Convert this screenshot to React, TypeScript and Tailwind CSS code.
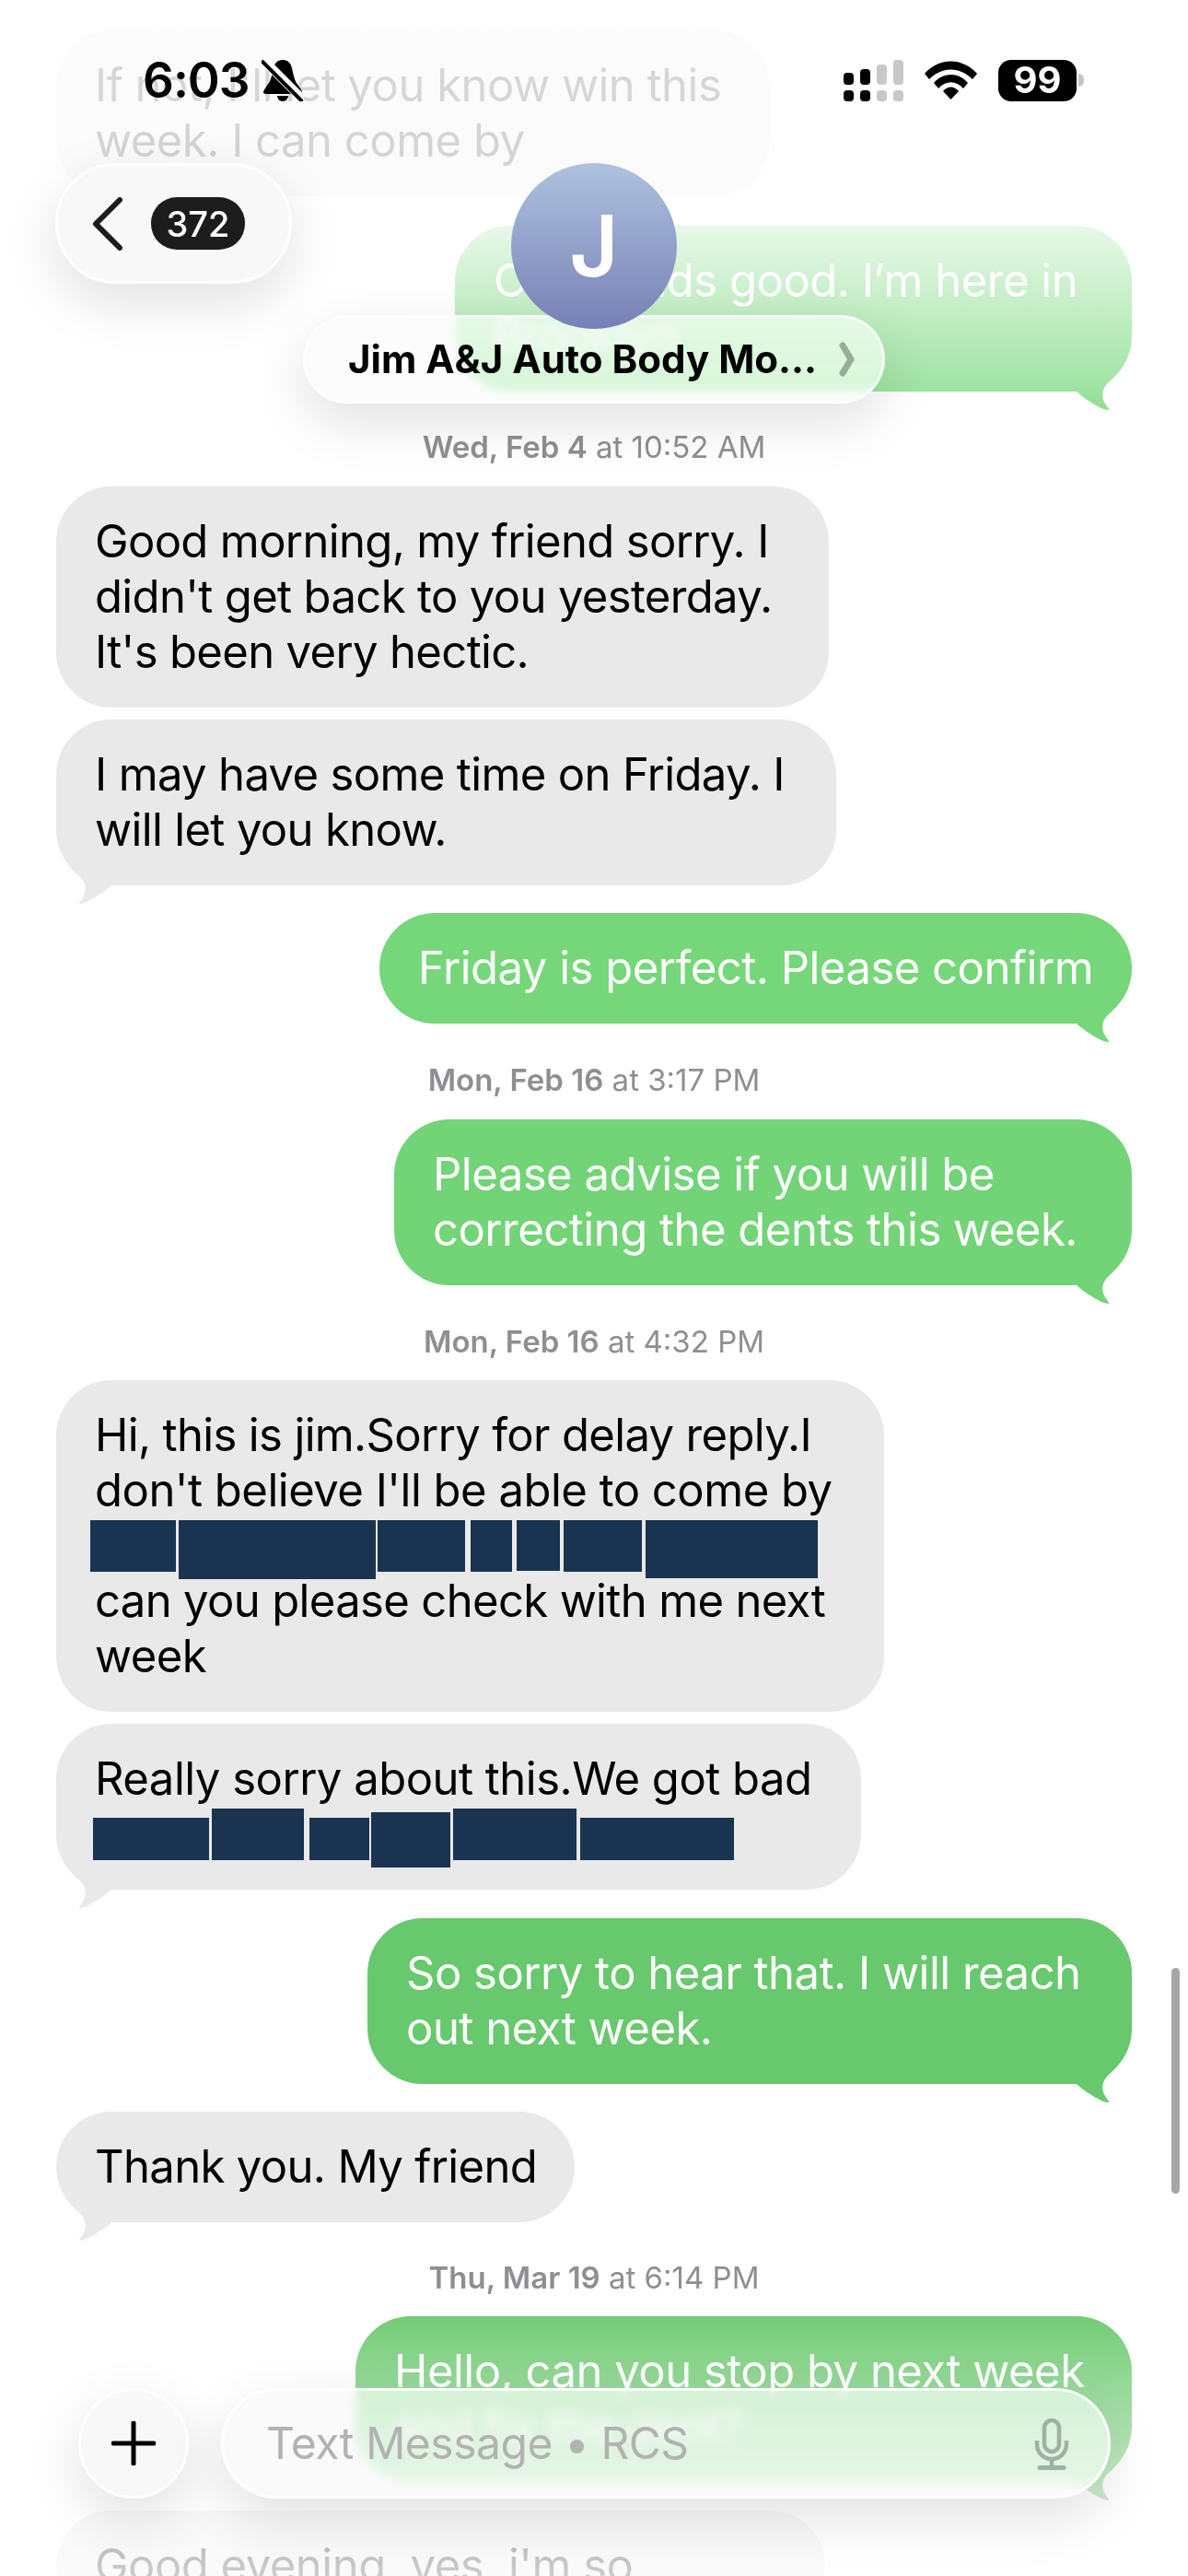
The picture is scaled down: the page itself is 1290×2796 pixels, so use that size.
import { ReactNode } from "react"

const stack = "font-['Inter','Liberation_Sans',sans-serif]"

function Tail({ side, color }: { side: "left" | "right"; color: string }) {
  return (
    <svg
      viewBox="0 0 70 81"
      className={`absolute bottom-[-20px] w-[70px] h-[81px] ${side === "right" ? "right-0" : "left-0 -scale-x-100"} ${color}`}
      fill="currentColor"
    >
      <path d="M69 0C68 20 58 40 46 50C38 56 36 66 41 74C44 79 47 81 44 81C38 81 20 70 10 61L0 61L0 30Z" />
    </svg>
  )
}

function Gray({ children, tail, className }: { children: ReactNode; tail?: boolean; className: string }) {
  return (
    <div className={`relative self-start rounded-[60px] bg-[#e9e9e9] pl-[42px] py-[30px] text-black ${className}`}>
      {tail && <Tail side="left" color="text-[#e9e9e9]" />}
      <div className="relative">{children}</div>
    </div>
  )
}

function Green({ children, bg, tailColor, className }: { children: ReactNode; bg: string; tailColor: string; className: string }) {
  return (
    <div className={`relative self-end rounded-[60px] pl-[42px] py-[30px] text-white ${bg} ${className}`}>
      <Tail side="right" color={tailColor} />
      <div className="relative">{children}</div>
    </div>
  )
}

function Stamp({ day, time, className }: { day: string; time: string; className: string }) {
  return (
    <div className={`text-center text-[33px] leading-[40px] tracking-normal text-[#8e8e93] ${className}`}>
      <span className="font-semibold">{day}</span> at {time}
    </div>
  )
}

export default function App() {
  return (
    <div className={`relative w-[1290px] h-[2796px] overflow-hidden bg-white ${stack} text-[49px] leading-[60px] tracking-[-0.5px]`}>
      <div className="flex flex-col px-[61px] pt-[33px]">
        <Gray className="w-[775px]">
          <div>If not, I'll let you know win this</div>
          <div>week. I can come by</div>
        </Gray>
        <Green className="w-[735px] mt-[32px]" bg="bg-[#76d87a]" tailColor="text-[#76d87a]">
          <div>Ok sounds good. I’m here in</div>
          <div>Brooklyn</div>
        </Green>

        <Stamp day="Wed, Feb 4" time="10:52 AM" className="mt-[40px]" />
        <Gray className="w-[839px] mt-[23px]">
          <div className="tracking-[-0.65px]">Good morning, my friend sorry. I</div>
          <div className="tracking-[-0.65px]">didn't get back to you yesterday.</div>
          <div className="tracking-[-0.65px]">It's been very hectic.</div>
        </Gray>
        <Gray className="w-[847px] mt-[13px]" tail>
          <div className="tracking-[-0.65px]">I may have some time on Friday. I</div>
          <div className="tracking-[-0.65px]">will let you know.</div>
        </Gray>
        <Green className="w-[817px] mt-[30px]" bg="bg-[#75d779]" tailColor="text-[#75d779]">
          <div>Friday is perfect. Please confirm</div>
        </Green>

        <Stamp day="Mon, Feb 16" time="3:17 PM" className="mt-[41px]" />
        <Green className="w-[801px] mt-[23px]" bg="bg-[#72d476]" tailColor="text-[#72d476]">
          <div>Please advise if you will be</div>
          <div>correcting the dents this week.</div>
        </Green>

        <Stamp day="Mon, Feb 16" time="4:32 PM" className="mt-[41px]" />
        <Gray className="w-[899px] mt-[22px]">
          <div className="tracking-[-0.65px]">Hi, this is jim.Sorry for delay reply.I</div>
          <div>don't believe I'll be able to come by</div>
          <div className="flex items-start h-[60px] -ml-[5px]">
            <div className="mt-[2px] h-[56px] w-[93px] bg-[#1a3350]" />
            <div className="mt-[2px] h-[64px] w-[214px] ml-[3px] bg-[#1a3350]" />
            <div className="mt-[2px] h-[56px] w-[95px] ml-[2px] bg-[#1a3350]" />
            <div className="mt-[2px] h-[56px] w-[45px] ml-[6px] bg-[#1a3350]" />
            <div className="mt-[2px] h-[55px] w-[47px] ml-[5px] bg-[#1a3350]" />
            <div className="mt-[2px] h-[56px] w-[85px] ml-[4px] bg-[#1a3350]" />
            <div className="mt-[2px] h-[63px] w-[187px] ml-[4px] bg-[#1a3350]" />
          </div>
          <div className="tracking-[-0.65px]">can you please check with me next</div>
          <div>week</div>
        </Gray>
        <Gray className="w-[874px] mt-[13px]" tail>
          <div>Really sorry about this.We got bad</div>
          <div className="flex items-start h-[60px] -ml-[2px]">
            <div className="mt-[12px] h-[46px] w-[126px] bg-[#1a3350]" />
            <div className="mt-[2px] h-[56px] w-[100px] ml-[3px] bg-[#1a3350]" />
            <div className="mt-[12px] h-[46px] w-[65px] ml-[6px] bg-[#1a3350]" />
            <div className="mt-[6px] h-[60px] w-[86px] ml-[2px] bg-[#1a3350]" />
            <div className="mt-[2px] h-[56px] w-[134px] ml-[3px] bg-[#1a3350]" />
            <div className="mt-[12px] h-[46px] w-[167px] ml-[4px] bg-[#1a3350]" />
          </div>
        </Gray>
        <Green className="w-[830px] mt-[31px]" bg="bg-[#68c86d]" tailColor="text-[#68c86d]">
          <div>So sorry to hear that. I will reach</div>
          <div>out next week.</div>
        </Green>
        <Gray className="w-[563px] mt-[30px]" tail>
          <div className="tracking-[-0.65px]">Thank you. My friend</div>
        </Gray>

        <Stamp day="Thu, Mar 19" time="6:14 PM" className="mt-[40px]" />
        <Green className="w-[843px] mt-[22px]" bg="bg-[#6bc96f]" tailColor="text-[#6bc96f]">
          <div>Hello, can you stop by next week</div>
          <div>and fix the dent?</div>
        </Green>
        <Gray className="w-[835px] mt-[31px]">
          <div>Good evening, yes, i'm so</div>
        </Gray>
      </div>

      {/* fades under the bars */}
      <div className="absolute inset-x-0 top-0 h-[470px] bg-[linear-gradient(to_bottom,rgba(255,255,255,0.85)_0%,rgba(255,255,255,0.82)_53%,rgba(255,255,255,0.3)_90%,rgba(255,255,255,0)_100%)]" />
      <div className="absolute inset-x-0 bottom-0 h-[300px] bg-[linear-gradient(to_top,rgba(255,255,255,0.8)_0%,rgba(255,255,255,0.66)_30%,rgba(255,255,255,0)_100%)]" />

      {/* scroll indicator */}
      <div className="absolute left-[1272px] top-[2136px] h-[245px] w-[9px] rounded-full bg-[#a6a6a6]" />

      {/* status bar */}
      <div className="absolute inset-x-0 top-[60px] flex items-center pl-[155px] pr-[113px] h-[54px]">
        <span className="text-[53px] font-semibold leading-none tracking-[-1px] text-black">6:03</span>
        <svg viewBox="0 0 46 46" className="ml-[14px] w-[46px] h-[46px]" fill="black">
          <path d="M23 1c-6 0-9 4-10 9-2 9-3 14-7 19-2 3-4 5-4 7 0 1 1 2 3 2h36c2 0 3-1 3-2 0-2-2-4-4-7-4-5-5-10-7-19-1-5-4-9-10-9z" />
          <path d="M17 40a6 6 0 0012 0z" />
          <path d="M4 -1L47 42" stroke="white" strokeWidth="4" />
          <path d="M1 2L44 45" stroke="white" strokeWidth="7" />
          <path d="M1 3L43 45" stroke="black" strokeWidth="4" strokeLinecap="round" />
        </svg>
        <div className="ml-auto flex items-center">
          <svg viewBox="0 0 65 45" className="w-[65px] h-[45px]">
            <rect x="0" y="14" width="11" height="13" rx="4" fill="black" />
            <rect x="18" y="10" width="11" height="17" rx="4" fill="black" />
            <rect x="36" y="5" width="11" height="22" rx="4" fill="#c8c8c8" />
            <rect x="54" y="0" width="11" height="27" rx="4" fill="#c8c8c8" />
            <rect x="0" y="33" width="11" height="12" rx="4" fill="black" />
            <rect x="18" y="33" width="11" height="12" rx="4" fill="black" />
            <rect x="36" y="33" width="11" height="12" rx="4" fill="#c8c8c8" />
            <rect x="54" y="33" width="11" height="12" rx="4" fill="#c8c8c8" />
          </svg>
          <svg viewBox="0 0 57 42" className="ml-[23px] w-[57px] h-[42px]" fill="black">
            <path d="M0 14C16 -4 41 -4 57 14L52 20C38 6 19 6 5 20Z" />
            <path d="M10 24C20 12 37 12 47 24L42 30C34 21 23 21 15 30Z" />
            <path d="M20 33C25 27 32 27 37 33L28.5 42Z" />
          </svg>
          <div className="ml-[23px] flex h-[45px] w-[85px] items-center justify-center rounded-[14px] bg-black text-[40px] font-bold leading-none tracking-normal text-white">99</div>
          <div className="ml-[2px] h-[14px] w-[6px] rounded-r-full bg-[#c4c4c4]" />
        </div>
      </div>

      {/* back button */}
      <div className="absolute left-[60px] top-[177px] flex h-[131px] w-[257px] items-center rounded-[65px] border-[3px] border-white bg-[#f8f8f8] pl-[37px] shadow-[0_20px_60px_rgba(0,0,0,0.12)]">
        <svg viewBox="0 0 34 58" className="w-[34px] h-[58px]" fill="none" stroke="#1c1c1c" strokeWidth="6" strokeLinecap="round" strokeLinejoin="round">
          <path d="M30 3L4 29L30 55" />
        </svg>
        <div className="ml-[30px] flex h-[57px] w-[102px] items-center justify-center rounded-[28px] bg-[#1c1c1c] text-[38px] font-medium leading-none tracking-normal text-white">372</div>
      </div>

      {/* contact */}
      <div className="absolute left-[329px] top-[342px] flex h-[96px] w-[632px] items-center rounded-[48px] border-[3px] border-white/70 bg-[#fbfbfb]/70 pl-[46px] backdrop-blur-[5px] backdrop-saturate-150 shadow-[0_20px_60px_rgba(0,0,0,0.12)]">
        <span className="text-[42px] font-bold leading-none tracking-normal text-black whitespace-nowrap">Jim A&amp;J Auto Body Mo...</span>
        <svg viewBox="0 0 18 38" className="absolute left-[579px] top-[26px] w-[18px] h-[38px]" fill="none" stroke="#98ac9b" strokeWidth="7" strokeLinecap="round" strokeLinejoin="round">
          <path d="M4 4L13 19L4 34" />
        </svg>
      </div>
      <div className="absolute left-[555px] top-[177px] flex h-[180px] w-[180px] items-center justify-center rounded-full bg-[linear-gradient(to_bottom,#aec2df,#7780b5)] text-[92px] font-semibold leading-none tracking-normal text-white">J</div>

      {/* composer */}
      <div className="absolute left-[85px] top-[2592px] flex h-[120px] w-[120px] items-center justify-center rounded-full border-[3px] border-white bg-[#f8f8f8] shadow-[0_20px_60px_rgba(0,0,0,0.12)]">
        <svg viewBox="0 0 48 48" className="w-[48px] h-[48px]" stroke="black" strokeWidth="5" strokeLinecap="round">
          <path d="M24 2V46M2 24H46" />
        </svg>
      </div>
      <div className="absolute left-[240px] top-[2592px] flex h-[120px] w-[966px] items-center rounded-[60px] border-[3px] border-white/90 bg-[#f8f8f8]/70 pl-[46px] backdrop-blur-[6px] backdrop-saturate-150 shadow-[0_20px_60px_rgba(0,0,0,0.12)]">
        <span className="text-[48px] leading-none text-[#b2b2b2]">Text Message • RCS</span>
        <svg viewBox="0 0 38 56" className="absolute right-[42px] top-[30px] w-[38px] h-[56px]" fill="none" stroke="#9fb0a5" strokeWidth="4.5">
          <rect x="11" y="2" width="16" height="34" rx="8" />
          <path d="M3 24V28C3 37 10 44 19 44C28 44 35 37 35 28V24" />
          <path d="M19 44V52" />
          <path d="M6 53.5H32" strokeWidth="5" strokeLinecap="round" />
        </svg>
      </div>
    </div>
  )
}
